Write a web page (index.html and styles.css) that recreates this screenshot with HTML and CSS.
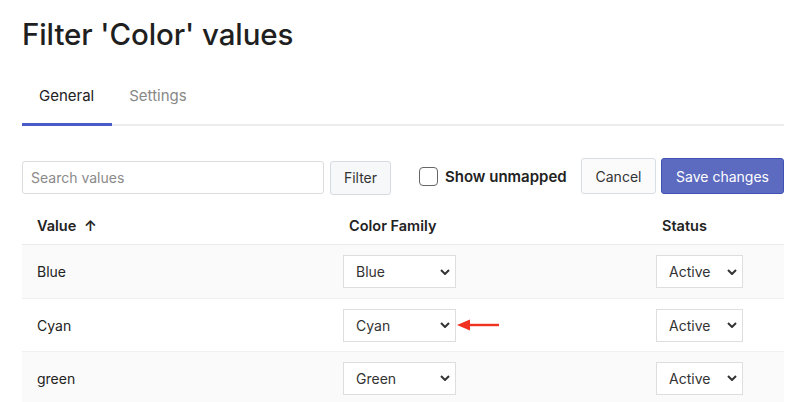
FILE: index.html
```html
<!DOCTYPE html>
<html>
<head>
<meta charset="utf-8">
<link rel="stylesheet" href="styles.css">
</head>
<body>
<div class="page">
  <h1 class="title">Filter 'Color' values</h1>
  <div class="tabs">
    <div class="tab active">General</div>
    <div class="tab">Settings</div>
  </div>
  <div class="toolbar">
    <input class="search" type="text" placeholder="Search values">
    <button class="btn btn-filter">Filter</button>
    <label class="check"><span class="box"></span><span class="check-label">Show unmapped</span></label>
    <div class="actions">
      <button class="btn btn-cancel">Cancel</button>
      <button class="btn btn-save">Save changes</button>
    </div>
  </div>
  <div class="table">
    <div class="row head">
      <div class="cell">Value <span class="sort">↑</span></div>
      <div class="cell">Color Family</div>
      <div class="cell">Status</div>
    </div>
    <div class="row alt">
      <div class="cell name">Blue</div>
      <div class="cell sel"><div class="select wide"><span>Blue</span><svg class="chev" viewBox="0 0 10 6"><path d="M1 1l4 4 4-4"/></svg></div></div>
      <div class="cell sel"><div class="select narrow"><span>Active</span><svg class="chev" viewBox="0 0 10 6"><path d="M1 1l4 4 4-4"/></svg></div></div>
    </div>
    <div class="row">
      <div class="cell name">Cyan</div>
      <div class="cell sel"><div class="select wide"><span>Cyan</span><svg class="chev" viewBox="0 0 10 6"><path d="M1 1l4 4 4-4"/></svg></div>
        <svg class="pointer" viewBox="0 0 44 12"><path d="M12 6H42" stroke="#f0321e" stroke-width="2.4"/><path d="M0 6L13 0.5V11.5Z" fill="#f0321e"/></svg>
      </div>
      <div class="cell sel"><div class="select narrow"><span>Active</span><svg class="chev" viewBox="0 0 10 6"><path d="M1 1l4 4 4-4"/></svg></div></div>
    </div>
    <div class="row alt">
      <div class="cell name">green</div>
      <div class="cell sel"><div class="select wide"><span>Green</span><svg class="chev" viewBox="0 0 10 6"><path d="M1 1l4 4 4-4"/></svg></div></div>
      <div class="cell sel"><div class="select narrow"><span>Active</span><svg class="chev" viewBox="0 0 10 6"><path d="M1 1l4 4 4-4"/></svg></div></div>
    </div>
  </div>
</div>
</body>
</html>
```
FILE: styles.css
```css
* { box-sizing: border-box; }
html, body { margin: 0; padding: 0; background: #fff; }
body { font-family: Inter, "Noto Sans", sans-serif; color: #222; }
.page { padding: 0 16px 0 22px; width: 800px; }
.title { margin: 0; padding-top: 15px; font-size: 29.5px; font-weight: 500; line-height: 38px; color: #1f1f1f; letter-spacing: -0.1px; }
.tabs { display: flex; margin-top: 23px; border-bottom: 2px solid #ececec; height: 50px; }
.tab { padding: 0 18px 0 17px; font-size: 15px; line-height: 40px; color: #888; }
.tab.active { color: #222; border-bottom: 3px solid #4a5bc7; margin-bottom: -2px; height: 50px; }
.toolbar { display: flex; align-items: center; margin-top: 32px; height: 36px; }
.search { width: 302px; height: 33px; margin-top: 3px; border: 1px solid #dcdcdc; border-radius: 3px; padding: 0 8px; font: inherit; font-size: 14px; color: #333; }
.search::placeholder { color: #8a8a8a; }
.btn { font: inherit; font-size: 14px; border-radius: 3px; cursor: pointer; }
.btn-filter { margin-left: 6px; width: 61px; height: 34px; margin-top: 3px; background: #f6f8fa; border: 1px solid #d5dbe2; color: #333; }
.check { display: flex; align-items: center; margin-left: 28px; }
.box { width: 19px; height: 19px; border: 1.5px solid #666; border-radius: 4px; background: #fff; }
.check-label { margin-left: 7px; font-size: 15px; font-weight: 600; color: #222; }
.actions { display: flex; margin-left: auto; gap: 5px; }
.btn-cancel { width: 75px; height: 36px; background: #fbfbfc; border: 1px solid #d8dde3; color: #333; }
.btn-save { width: 123px; height: 36px; background: #5c6bc0; border: 1px solid #3f51b5; color: #fff; }
.table { margin-top: 10px; }
.row { display: grid; grid-template-columns: 312px 313px 137px; height: 53px; align-items: center; border-top: 1px solid #f0f0f0; }
.row.head { height: 41px; border-top: none; border-bottom: 1px solid #ebebeb; font-weight: 600; font-size: 14.5px; padding-top: 2px; }
.row.head .cell { font-size: 14.5px; }
.row.head + .row { border-top: none; }
.row.alt { background: #fafafa; }
.cell { padding-left: 15px; font-size: 14px; position: relative; }
.sort { margin-left: 4px; font-weight: 600; }
.cell.sel { padding-left: 9px; display: flex; align-items: center; }
.select { height: 33px; border: 1px solid #dedede; background: #fff; display: flex; align-items: center; justify-content: space-between; padding: 0 5px 0 12px; font-size: 14px; color: #333; }
.select.wide { width: 113px; }
.select.narrow { width: 87px; }
.chev { width: 10px; height: 6px; fill: none; stroke: #333; stroke-width: 2; }
.pointer { width: 44px; height: 12px; margin-left: 1px; }
```
